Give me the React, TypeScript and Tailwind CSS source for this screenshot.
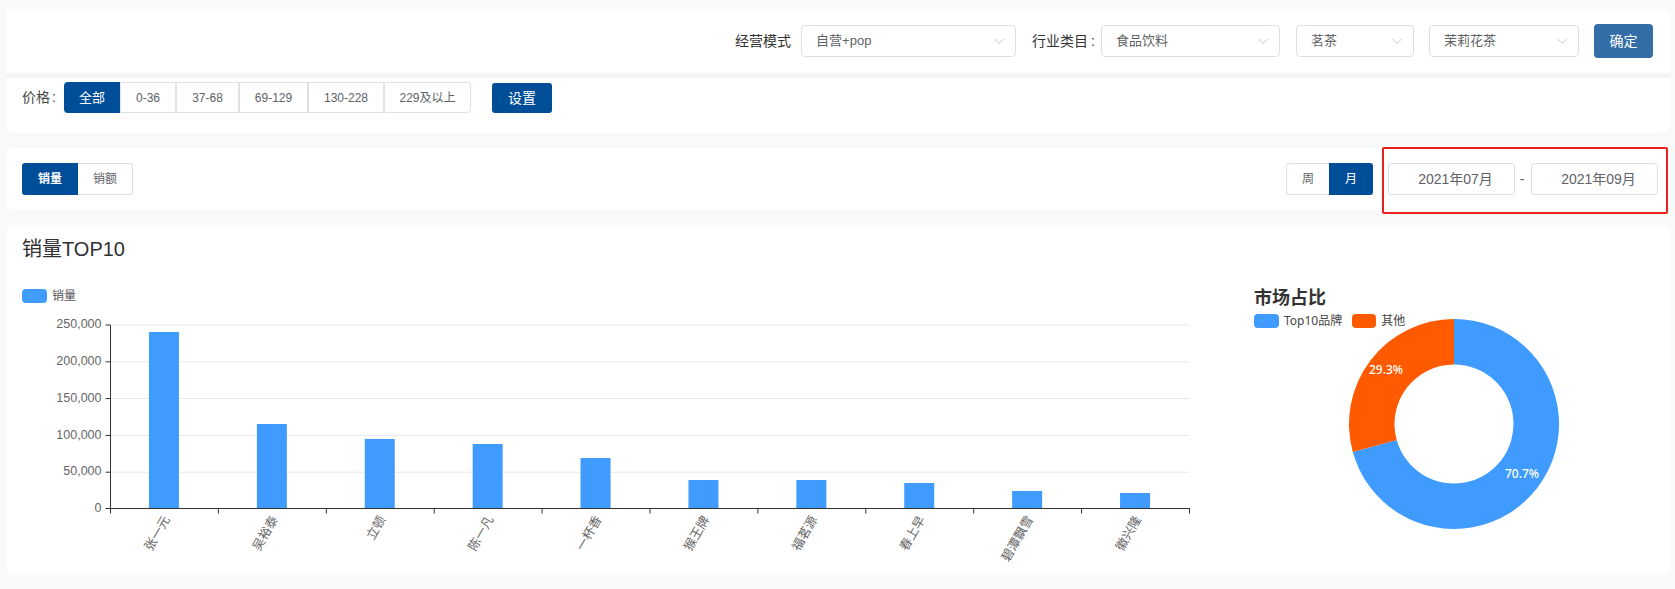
const font = '"Liberation Sans","Noto Sans CJK SC",sans-serif';
const gridY = [325, 361.8, 398.6, 435.4, 472.2];
const yLabels = ['250,000', '200,000', '150,000', '100,000', '50,000', '0'];
const bars: [string, number][] = [
  ['张一元', 332], ['吴裕泰', 424], ['立顿', 439], ['陈一凡', 444], ['一杯香', 458],
  ['猴王牌', 480], ['福茗源', 480], ['春上早', 483], ['碧潭飘雪', 491], ['徽兴隆', 493],
];
const x0 = 110.5, step = 107.9, y0 = 508.5;

function BarChart() {
  return (
    <svg width="1190" height="265" viewBox="0 310 1190 265" className="block" style={{ fontFamily: font }}>
      {gridY.map((y) => <line key={y} x1={x0} x2={1189.5} y1={y} y2={y} stroke="#e8e8e8" />)}
      {bars.map(([n, top], i) => {
        const cx = x0 + step * i + step / 2;
        return (
          <g key={n}>
            <rect x={cx - 15.5} y={top} width={30} height={y0 - top} fill="#3f9bfd" />
            <text transform={`translate(${cx + 3},${y0 + 9}) rotate(-60)`} textAnchor="end" dominantBaseline="middle" fontSize="12.5" fill="#666">{n}</text>
          </g>
        );
      })}
      <line x1={x0} x2={x0} y1={325} y2={y0} stroke="#333" />
      <line x1={x0} x2={1190} y1={y0} y2={y0} stroke="#333" />
      {[...gridY, y0].map((y, i) => (
        <g key={y}>
          <line x1={x0 - 5} x2={x0} y1={y} y2={y} stroke="#333" />
          <text x={x0 - 9} y={y} textAnchor="end" dominantBaseline="middle" fontSize="12.5" fill="#666">{yLabels[i]}</text>
        </g>
      ))}
      {Array.from({ length: 11 }, (_, i) => x0 + step * i).map((x) => (
        <line key={x} x1={x} x2={x} y1={y0} y2={y0 + 5} stroke="#333" />
      ))}
    </svg>
  );
}

function Donut() {
  const cx = 106, cy = 106, R = 105, r = 59.5;
  const a = 2 * Math.PI * 0.707;
  const px = (rad: number, t: number) => (cx + rad * Math.sin(t)).toFixed(2);
  const py = (rad: number, t: number) => (cy - rad * Math.cos(t)).toFixed(2);
  const blue = `M${cx} ${cy - R}A${R} ${R} 0 1 1 ${px(R, a)} ${py(R, a)}L${px(r, a)} ${py(r, a)}A${r} ${r} 0 1 0 ${cx} ${cy - r}Z`;
  const orange = `M${px(R, a)} ${py(R, a)}A${R} ${R} 0 0 1 ${cx} ${cy - R}L${cx} ${cy - r}A${r} ${r} 0 0 0 ${px(r, a)} ${py(r, a)}Z`;
  return (
    <svg width="212" height="212" viewBox="0 0 212 212" className="block" style={{ fontFamily: '"Noto Sans",sans-serif' }}>
      <path d={blue} fill="#3f9bfd" />
      <path d={orange} fill="#ff5a00" />
      <text x={174} y={157} textAnchor="middle" dominantBaseline="middle" fontSize="12" fontWeight="500" fill="#fff">70.7%</text>
      <text x={38} y={53} textAnchor="middle" dominantBaseline="middle" fontSize="12" fontWeight="500" fill="#fff">29.3%</text>
    </svg>
  );
}

function Select({ w, text }: { w: string; text: string }) {
  return (
    <div className={`${w} h-[32px] flex items-center justify-between pl-[14px] pr-[11px] bg-white border border-[#dcdfe6] rounded-[4px] text-[13px] text-[#606266]`}>
      <span>{text}</span>
      <svg width="10" height="10" viewBox="0 0 10 10" fill="none" stroke="#c0c4cc" strokeWidth="1"><path d="M0.5 3l4.5 4.5L9.5 3" /></svg>
    </div>
  );
}

const prices = [['0-36', 'w-[56px]'], ['37-68', 'w-[63px]'], ['69-129', 'w-[69px]'], ['130-228', 'w-[76px]'], ['229及以上', 'w-[87px]']];

export default function App() {
  return (
    <div className="relative w-[1675px] h-[589px] overflow-hidden bg-[#f8f9fb] pt-[9px] pl-[6px] pr-[5px] text-[#333]" style={{ fontFamily: font }}>
      <div className="h-[64px] bg-white rounded-t-[6px] shadow-[0_5px_0_#f4f5f6] pr-[17px] flex items-center justify-end text-[14px]">
        <span className="mr-[10px]">经营模式</span>
        <Select w="w-[215px]" text="自营+pop" />
        <span className="ml-[16px] mr-[6px]">行业类目<span className="ml-[3px]">:</span></span>
        <Select w="w-[179px]" text="食品饮料" />
        <div className="w-[16px]" />
        <Select w="w-[118px]" text="茗茶" />
        <div className="w-[15px]" />
        <Select w="w-[150px]" text="茉莉花茶" />
        <button className="ml-[15px] w-[59px] h-[34px] rounded-[4px] bg-[#346ea8] text-white text-[14px]">确定</button>
      </div>
      <div className="mt-[5px] h-[55px] bg-white rounded-b-[8px] pl-[16px] pt-[4px] flex items-start text-[13px]">
        <span className="text-[14px] leading-[31px] w-[42px] text-[#444]">价格<span className="ml-[2px]">:</span></span>
        <div className="flex h-[31px]">
          <div className="w-[56px] flex items-center justify-center bg-[#004e98] text-white rounded-l-[4px]">全部</div>
          {prices.map(([p, w], i) => (
            <div key={p} className={`${w} flex items-center justify-center border border-[#dfe1e6] text-[12px] text-[#606266] ${i === 4 ? 'rounded-r-[4px]' : ''}`}>{p}</div>
          ))}
        </div>
        <button className="ml-[21px] mt-[1px] w-[60px] h-[30px] rounded-[3px] bg-[#004e98] text-white text-[14px]">设置</button>
      </div>
      <div className="mt-[15px] h-[62px] bg-white rounded-[8px] pl-[16px] pr-[12px] flex items-center justify-between text-[12px]">
        <div className="flex h-[32px]">
          <div className="w-[56px] flex items-center justify-center bg-[#004e98] text-white font-bold rounded-l-[3px]">销量</div>
          <div className="w-[55px] flex items-center justify-center border border-l-0 border-[#dcdfe6] rounded-r-[3px] text-[#606266]">销额</div>
        </div>
        <div className="flex items-center">
          <div className="flex h-[32px]">
            <div className="w-[43px] flex items-center justify-center border border-r-0 border-[#dcdfe6] rounded-l-[3px] text-[#606266]">周</div>
            <div className="w-[44px] flex items-center justify-center bg-[#004e98] text-white rounded-r-[3px]">月</div>
          </div>
          <div className="ml-[15px] w-[127px] h-[32px] pl-[8px] flex items-center justify-center border border-[#dcdfe6] rounded-[3px] text-[14px] text-[#606266]">2021年07月</div>
          <span className="w-[16px] pr-[2px] text-center text-[14px] text-[#606266]">-</span>
          <div className="w-[127px] h-[32px] pl-[8px] flex items-center justify-center border border-[#dcdfe6] rounded-[3px] text-[14px] text-[#606266]">2021年09月</div>
        </div>
      </div>
      <div className="absolute left-[1382px] top-[147px] w-[286px] h-[67px] border-2 border-[#e8211c] rounded-[2px]" />
      <div className="mt-[15px] h-[350px] bg-white rounded-[8px] flex">
        <div className="w-[1190px] -ml-[6px] shrink-0">
          <div className="pl-[22px] pt-[10px] text-[20px] leading-[28px] text-[#303133]">销量TOP10</div>
          <div className="pl-[22px] mt-[26px] h-[14px] flex items-center text-[12px] text-[#555]">
            <span className="w-[25px] h-[14px] rounded-[4px] bg-[#3f9bfd] mr-[5px]" />销量
          </div>
          <div className="pt-[7px]"><BarChart /></div>
        </div>
        <div className="ml-[64px] pt-[59px] relative">
          <div className="text-[18px] leading-[24px] font-bold text-[#333]" style={{ fontFamily: '"Noto Sans CJK SC",sans-serif' }}>市场占比</div>
          <div className="mt-[6px] h-[14px] flex items-center text-[12px] text-[#444]" style={{ fontFamily: '"Noto Sans","Noto Sans CJK SC",sans-serif' }}>
            <span className="w-[25px] h-[14px] rounded-[4px] bg-[#3f9bfd] mr-[5px]" />Top10品牌
            <span className="w-[24px] h-[14px] rounded-[4px] bg-[#ff5a00] ml-[10px] mr-[5px]" />其他
          </div>
          <div className="-mt-[10px] ml-[94px]"><Donut /></div>
        </div>
      </div>
    </div>
  );
}
